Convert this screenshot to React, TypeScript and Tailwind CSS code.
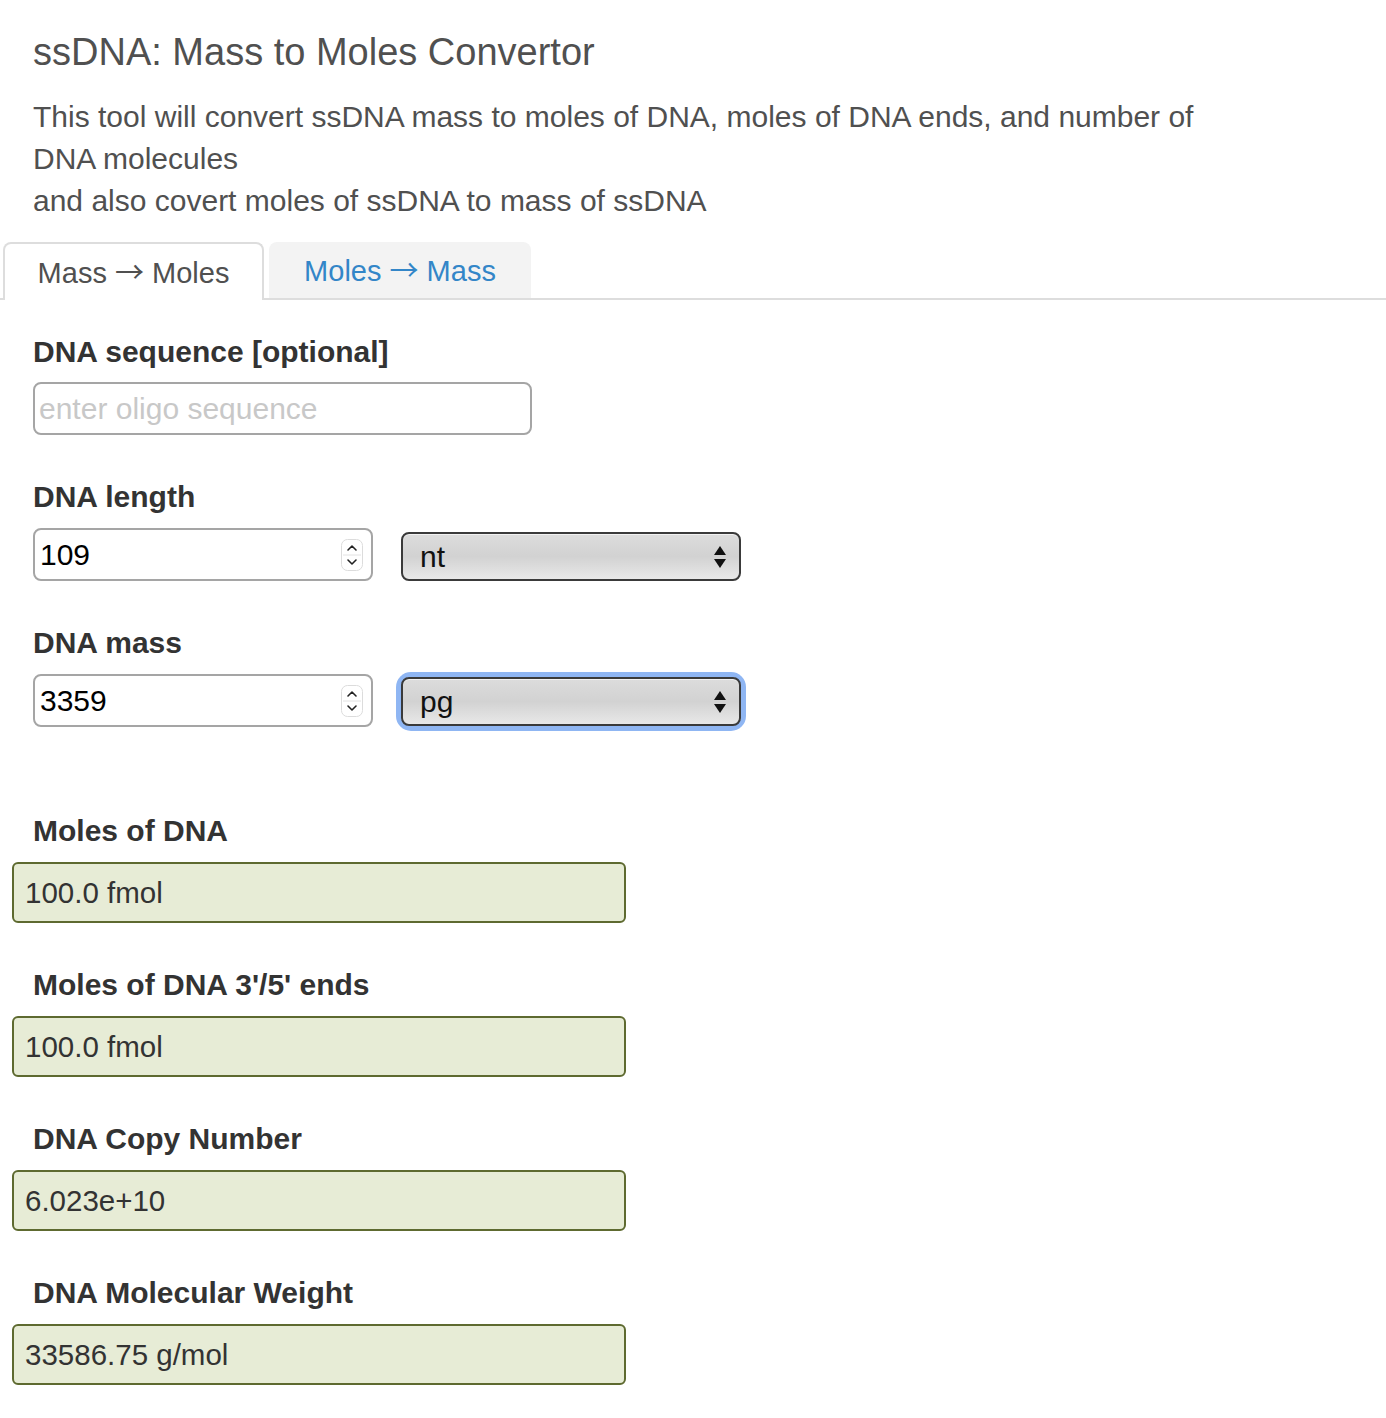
import React from "react"

const font = { fontFamily: '"Liberation Sans", Arial, Helvetica, sans-serif' }

function Arrow() {
  return <span style={{ fontFamily: '"Noto Sans CJK JP", "DejaVu Sans", sans-serif' }}>→</span>
}

function Spinner() {
  return (
    <svg width="22" height="32" viewBox="0 0 22 32" className="shrink-0">
      <rect x="0.5" y="0.5" width="21" height="31" rx="6" fill="#fff" stroke="#dcdcdc" />
      <line x1="2" y1="16" x2="20" y2="16" stroke="#e2e2e2" />
      <path d="M7 11 L11 7 L15 11" fill="none" stroke="#222" strokeWidth="1.6" strokeLinecap="round" strokeLinejoin="round" />
      <path d="M7 21 L11 25 L15 21" fill="none" stroke="#222" strokeWidth="1.6" strokeLinecap="round" strokeLinejoin="round" />
    </svg>
  )
}

function NumberBox({ value }: { value: string }) {
  return (
    <div className="w-[340px] h-[53px] border-2 border-[#a5a5a5] rounded-[8px] bg-white flex items-center justify-between pl-[5px] pr-[8px]">
      <span className="text-[30px] text-black leading-none">{value}</span>
      <Spinner />
    </div>
  )
}

function SelectBox({ value, focused }: { value: string; focused?: boolean }) {
  return (
    <div className={`w-[340px] rounded-[10px] ${focused ? "ring-[5px] ring-[#8fb6f3]" : ""}`}>
      <div className="h-[49px] border-2 border-[#3a3a3a] rounded-[8px] bg-gradient-to-b from-[#dcdcdc] via-[#d2d2d2] to-[#e8e8e8] flex items-center justify-between pl-[17px] pr-[12px] shadow-[inset_0_1px_0_rgba(255,255,255,0.6)]">
        <span className="text-[30px] text-[#111] leading-none">{value}</span>
        <svg width="14" height="28" viewBox="0 0 14 28">
          <path d="M7 3 L13 12 L1 12 Z" fill="#111" />
          <path d="M7 25 L13 16 L1 16 Z" fill="#111" />
        </svg>
      </div>
    </div>
  )
}

function Result({ label, value }: { label: string; value: string }) {
  return (
    <div className="flex flex-col">
      <div className="pl-[21px] text-[30px] font-bold text-[#333] leading-[34px]">{label}</div>
      <div className="mt-[14px] w-[614px] h-[61px] bg-[#e7ecd6] border-2 border-[#5e6a30] rounded-[6px] flex items-center pl-[11px]">
        <span className="text-[29.5px] text-[#333] leading-none">{value}</span>
      </div>
    </div>
  )
}

export default function App() {
  return (
    <div className="w-[1386px] h-[1418px] bg-white overflow-hidden" style={font}>
      <div className="px-[33px] pt-[30px]">
        <h1 className="text-[38px] text-[#505050] leading-[44px] whitespace-nowrap">ssDNA: Mass to Moles Convertor</h1>
        <p className="mt-[22px] text-[30px] text-[#505050] leading-[42px] whitespace-nowrap">
          This tool will convert ssDNA mass to moles of DNA, moles of DNA ends, and number of
          <br />
          DNA molecules
          <br />
          and also covert moles of ssDNA to mass of ssDNA
        </p>
      </div>

      {/* tabs */}
      <div className="mt-[20px] pl-[3px] flex items-end border-b-2 border-[#dddddd]">
        <div className="w-[261px] h-[58px] -mb-[2px] bg-white border-2 border-b-0 border-[#dddddd] rounded-t-[8px] flex items-center justify-center">
          <span className="text-[29px] text-[#505050] whitespace-nowrap">
            Mass <Arrow /> Moles
          </span>
        </div>
        <div className="ml-[5px] w-[262px] h-[56px] bg-[#f3f3f3] rounded-t-[8px] flex items-center justify-center">
          <span className="text-[29px] text-[#3386c8] whitespace-nowrap">
            Moles <Arrow /> Mass
          </span>
        </div>
      </div>

      <div className="px-[33px] pt-[35px]">
        <div className="text-[30px] font-bold text-[#333] leading-[34px]">DNA sequence [optional]</div>
        <div className="mt-[13px] w-[499px] h-[53px] border-2 border-[#a5a5a5] rounded-[8px] flex items-center pl-[4px]">
          <span className="text-[30px] text-[#c8c8c8] leading-none">enter oligo sequence</span>
        </div>

        <div className="mt-[45px] text-[30px] font-bold text-[#333] leading-[34px]">DNA length</div>
        <div className="mt-[14px] flex items-center gap-[28px]">
          <NumberBox value="109" />
          <div className="pt-[4px]">
            <SelectBox value="nt" />
          </div>
        </div>

        <div className="mt-[45px] text-[30px] font-bold text-[#333] leading-[34px]">DNA mass</div>
        <div className="mt-[14px] flex items-center gap-[28px]">
          <NumberBox value="3359" />
          <div className="pt-[2px]">
            <SelectBox value="pg" focused />
          </div>
        </div>
      </div>

      <div className="pl-[12px] pt-[87px] flex flex-col gap-[45px]">
        <Result label="Moles of DNA" value="100.0 fmol" />
        <Result label="Moles of DNA 3'/5' ends" value="100.0 fmol" />
        <Result label="DNA Copy Number" value="6.023e+10" />
        <Result label="DNA Molecular Weight" value="33586.75 g/mol" />
      </div>
    </div>
  )
}
